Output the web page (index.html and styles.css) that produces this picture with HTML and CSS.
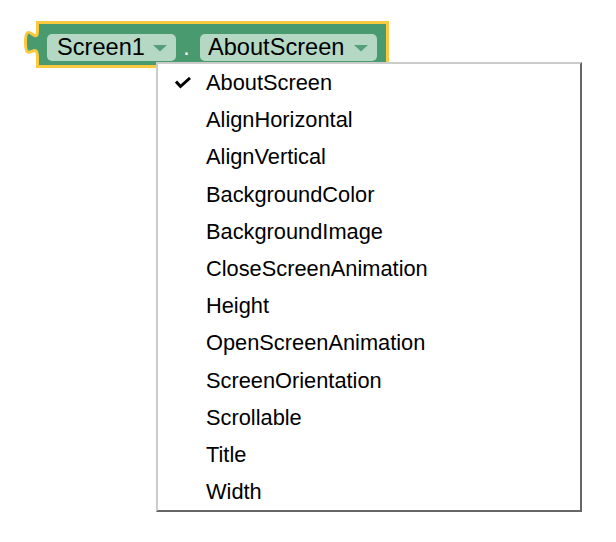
FILE: index.html
```html
<!DOCTYPE html>
<html>
<head>
<meta charset="utf-8">
<link rel="stylesheet" href="styles.css">
</head>
<body>
<div class="stage">
  <div class="block">
    <svg class="tab" width="22" height="34" viewBox="0 0 22 34">
      <path d="M17.5 3 c0,15 -12,-12 -12,11.25 s12,-3.75 12,15.75 L21 30 L21 3 Z" fill="#4a9a6f"/>
      <path d="M17.5 3 c0,15 -12,-12 -12,11.25 s12,-3.75 12,15.75" fill="none" stroke="#f9c940" stroke-width="3"/>
    </svg>
    <div class="pill pill-comp">
      <span class="pill-text">Screen1</span>
      <svg class="arrow" width="14" height="7" viewBox="0 0 14 7"><polygon points="0,0 14,0 7,6.5" fill="#55a07a"/></svg>
    </div>
    <span class="dot">.</span>
    <div class="pill pill-prop">
      <span class="pill-text">AboutScreen</span>
      <svg class="arrow" width="14" height="7" viewBox="0 0 14 7"><polygon points="0,0 14,0 7,6.5" fill="#55a07a"/></svg>
    </div>
  </div>

  <ul class="menu">
    <li class="item"><span class="slot"><svg class="check" width="16" height="12" viewBox="0 0 16 12"><polyline points="1,4.5 5.5,9.5 15,1" fill="none" stroke="#000" stroke-width="3"/></svg></span><span class="label">AboutScreen</span></li>
    <li class="item"><span class="slot"></span><span class="label">AlignHorizontal</span></li>
    <li class="item"><span class="slot"></span><span class="label">AlignVertical</span></li>
    <li class="item"><span class="slot"></span><span class="label">BackgroundColor</span></li>
    <li class="item"><span class="slot"></span><span class="label">BackgroundImage</span></li>
    <li class="item"><span class="slot"></span><span class="label">CloseScreenAnimation</span></li>
    <li class="item"><span class="slot"></span><span class="label">Height</span></li>
    <li class="item"><span class="slot"></span><span class="label">OpenScreenAnimation</span></li>
    <li class="item"><span class="slot"></span><span class="label">ScreenOrientation</span></li>
    <li class="item"><span class="slot"></span><span class="label">Scrollable</span></li>
    <li class="item"><span class="slot"></span><span class="label">Title</span></li>
    <li class="item"><span class="slot"></span><span class="label">Width</span></li>
  </ul>
</div>
</body>
</html>
```

FILE: styles.css
```css
html, body {
  margin: 0;
  padding: 0;
  background: #ffffff;
}

body {
  font-family: "Liberation Sans", Arial, Helvetica, sans-serif;
  color: #000;
  width: 616px;
  height: 542px;
  overflow: hidden;
}

.stage {
  position: relative;
  padding: 21px 0 0 36px;
}

.block {
  position: relative;
  display: inline-flex;
  align-items: flex-start;
  box-sizing: border-box;
  width: 353px;
  height: 47px;
  border: 3px solid #f9c940;
  background: #4a9a6f;
  padding: 10px 9px 4px 8px;
}

.tab {
  position: absolute;
  left: -19px;
  top: 4px;
}

.pill {
  display: flex;
  align-items: center;
  box-sizing: border-box;
  height: 27px;
  background: #b4d8c4;
  border-radius: 5px;
  padding-right: 9px;
}

.pill-comp {
  width: 129px;
  padding-left: 10px;
}

.pill-prop {
  width: 177px;
  padding-left: 8px;
}

.pill-text {
  font-size: 23.6px;
  line-height: 26px;
  padding-bottom: 1px;
  white-space: nowrap;
}

.arrow {
  margin-left: auto;
  margin-top: 2px;
  display: block;
}

.dot {
  width: 21px;
  padding-right: 3px;
  text-align: center;
  color: #ffffff;
  font-size: 23px;
  line-height: 26px;
}

.menu {
  position: absolute;
  left: 156px;
  top: 62px;
  box-sizing: border-box;
  width: 426px;
  margin: 0;
  padding: 0;
  list-style: none;
  background: #ffffff;
  border-top: 2px solid #cccccc;
  border-left: 2px solid #cccccc;
  border-right: 2px solid #666666;
  border-bottom: 2px solid #666666;
}

.item {
  display: flex;
  align-items: center;
  height: 37.2px;
  padding-left: 17px;
  font-size: 21.8px;
  white-space: nowrap;
}

.label {
  line-height: 36.2px;
  padding-top: 1px;
}

.slot {
  display: flex;
  align-items: center;
  width: 31px;
  height: 37.2px;
}

.check {
  display: block;
  margin-top: 1px;
}
```
